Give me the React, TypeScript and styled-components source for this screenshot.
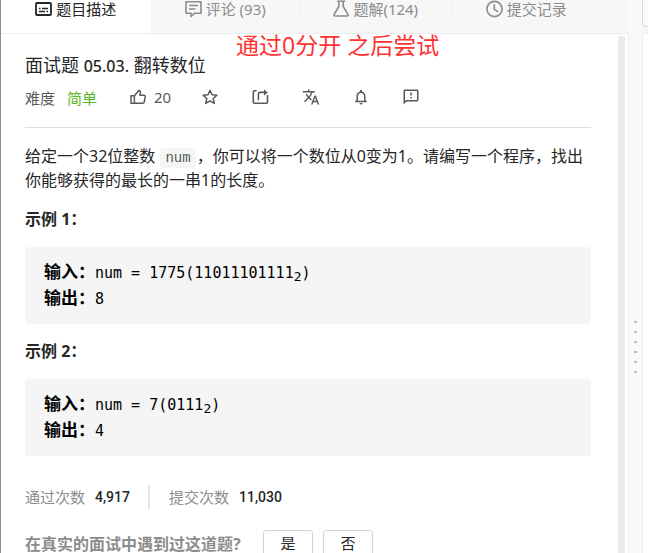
import React from "react";
import styled, { createGlobalStyle } from "styled-components";
import {
  MdOutlineFeedback,
  MdNotificationsNone,
  MdTranslate,
} from "react-icons/md";

const GlobalStyle = createGlobalStyle`
  * { box-sizing: border-box; }
  body {
    margin: 0;
    overflow: hidden;
    background: #fff;
    color: #262626;
    font-family: "Noto Sans", "Noto Sans CJK SC", sans-serif;
    font-size: 16px;
  }
  button { font: inherit; cursor: pointer; }
`;

const Page = styled.div`
  display: flex;
  height: 100vh;
  border-left: 1px solid #8c8c8c;
  background: #f7f7f7;
`;

const ProblemPane = styled.section`
  position: relative;
  display: flex;
  flex: 1;
  flex-direction: column;
  min-width: 0;
`;

const TabBar = styled.div`
  display: flex;
  height: 33px;
  padding-right: 28px;
`;

const Tab = styled.button<{ $active?: boolean }>`
  display: flex;
  flex: 1;
  align-items: flex-start;
  justify-content: center;
  gap: 4px;
  padding: 0;
  border: 0;
  background: ${(p) => (p.$active ? "#fff" : "transparent")};
  color: ${(p) => (p.$active ? "#262626" : "#8c8c8c")};
  font-size: 15px;
  line-height: 18px;
  white-space: nowrap;
  svg { flex: none; }
`;

const TabDivider = styled.span`
  width: 1px;
  height: 18px;
  background: #ececec;
`;

const Body = styled.div`
  display: flex;
  flex: 1;
  min-height: 0;
  border-top: 1px solid #ececec;
  border-right: 1px solid #ececec;
  background: #fff;
`;

const Content = styled.div`
  flex: 1;
  min-width: 0;
  overflow: hidden;
  padding: 16px 27px 0 24px;
`;

const ScrollTrack = styled.div`
  width: 7px;
  margin: 2px 3px 0 0;
  background: #ebebeb;
`;

const Title = styled.h1`
  margin: 0;
  font-size: 18px;
  font-weight: 400;
  line-height: 30px;
`;

const TitleNumber = styled.span`
  font-size: 16px;
  font-weight: 500;
`;

const MetaRow = styled.div`
  display: flex;
  align-items: center;
  height: 32px;
  color: #595959;
  font-size: 15px;
`;

const Difficulty = styled.span`
  width: 63px;
  margin-left: 12px;
  color: #5ab726;
`;

const IconButton = styled.button<{ $wide?: boolean }>`
  display: flex;
  align-items: center;
  gap: 8px;
  width: ${(p) => (p.$wide ? 72 : 50)}px;
  padding: 0;
  border: 0;
  background: none;
  color: #595959;
`;

const Rule = styled.hr`
  margin: 14px 0 16px;
  border: 0;
  border-top: 1px solid #dedede;
`;

const Paragraph = styled.p`
  margin: 0 0 15px;
  line-height: 24px;
`;

const InlineCode = styled.code`
  margin: 0 1px;
  padding: 2px 5px;
  border-radius: 3px;
  background: #f5f5f5;
  color: #595959;
  font-family: "Liberation Mono", monospace;
  font-size: 14px;
  line-height: 16px;
`;

const Example = styled.p`
  margin: 0 0 16px;
  font-weight: 700;
  line-height: 24px;
`;

const CodeBlock = styled.pre`
  margin: 0 0 15px;
  padding: 13px 18px 12px 19px;
  border-radius: 4px;
  background: #f5f5f5;
  color: #000;
  font-family: "DejaVu Sans Mono", "Noto Sans CJK SC", monospace;
  font-size: 15px;
  line-height: 26px;
`;

const Label = styled.strong`
  font-family: "Noto Sans CJK SC", sans-serif;
  font-size: 17px;
  line-height: 20px;
`;

const Sub = styled.sub`
  font-size: 13px;
  line-height: 0;
  vertical-align: -3px;
`;

const Stats = styled.div`
  display: flex;
  align-items: center;
  margin-top: 29px;
  color: #8c8c8c;
  font-size: 15px;
  line-height: 24px;
`;

const StatValue = styled.b`
  margin-left: 10px;
  color: #262626;
  font-family: Roboto, sans-serif;
  font-size: 14px;
  font-weight: 500;
`;

const StatDivider = styled.span`
  width: 2px;
  height: 24px;
  margin: 0 19px 0 18px;
  background: #e4e4e4;
`;

const Survey = styled.div`
  display: flex;
  align-items: center;
  gap: 10px;
  margin-top: 21px;
  color: #8c8c8c;
`;

const SurveyText = styled.span`
  min-width: 228px;
  font-weight: 700;
  white-space: nowrap;
`;

const Choice = styled.button`
  width: 50px;
  height: 26px;
  padding: 0;
  border: 1px solid #d4d4d4;
  border-radius: 3px;
  background: #fff;
  color: #262626;
  font-size: 15px;
  line-height: 22px;
`;

const Annotation = styled.div`
  position: absolute;
  top: 30px;
  left: 235px;
  color: #ff3333;
  font-size: 23px;
  line-height: 30px;
  white-space: nowrap;
`;

const Gutter = styled.div`
  display: flex;
  flex-direction: column;
  align-items: center;
  gap: 8px;
  width: 13px;
  padding-top: 321px;
  background: #f9f9f9;
`;

const Dot = styled.span`
  width: 3px;
  height: 2px;
  background: #bdbdbd;
`;

const EditorPane = styled.section`
  display: flex;
  flex-direction: column;
  width: 6px;
`;

const EditorControl = styled.div`
  height: 27px;
  margin-bottom: 6px;
  border: 1px solid #d9d9d9;
  border-width: 0 0 1px 1px;
  border-bottom-left-radius: 4px;
  background: #fafafa;
`;

const EditorBody = styled.div`
  flex: 1;
  border: 1px solid #ececec;
  border-width: 1px 0 0 1px;
  background: #fff;
`;

const DescriptionIcon = () => (
  <svg width="17" height="18" viewBox="0 0 17 18" fill="none" stroke="currentColor" strokeWidth="1.8">
    <rect x="1" y="3" width="15" height="12" rx="1" />
    <path d="M4 8.5h1.5M7 8.5h6M4 11.5h6M11.5 11.5H13" strokeWidth="1.5" />
  </svg>
);

const CommentIcon = () => (
  <svg width="17" height="18" viewBox="0 0 17 18" fill="none" stroke="currentColor" strokeWidth="1.6">
    <path d="M1 1.8h15v11.5H9.5L6 16.5v-3.2H1z" strokeLinejoin="round" />
    <path d="M4 5.5h9M4 9h6.5" />
  </svg>
);

const FlaskIcon = () => (
  <svg width="16" height="18" viewBox="0 0 16 18" fill="none" stroke="currentColor" strokeWidth="1.6">
    <path d="M4 1.3h8M5.8 1.3v5.2L1.1 14.3q-.6 1.7 1.2 1.7h11.4q1.8 0 1.2-1.7L10.2 6.5V1.3" strokeLinejoin="round" />
  </svg>
);

const ClockIcon = () => (
  <svg width="17" height="18" viewBox="0 0 17 18" fill="none" stroke="currentColor" strokeWidth="1.6">
    <circle cx="8.5" cy="9" r="7.6" />
    <path d="M8.3 4.2v5.2l3.7 2.3" />
  </svg>
);

const ThumbIcon = () => (
  <svg width="16" height="16" viewBox="0 0 16 16" fill="none" stroke="currentColor" strokeWidth="1.5" strokeLinejoin="round">
    <path d="M4.4 6.8H1v7.5h3.4zM4.4 14.3h8.3q1.2 0 1.5-1.2l1-5.2q.2-1.6-1.3-1.6H9.8l.6-3q.1-1.7-1.5-2.1L4.4 6.8" />
  </svg>
);

const StarIcon = () => (
  <svg width="16" height="16" viewBox="0 0 16 16" fill="none" stroke="currentColor" strokeWidth="1.5" strokeLinejoin="round">
    <path d="M8 1.3l2 4.5 4.9.5-3.7 3.2 1.1 4.9L8 11.9l-4.3 2.5 1.1-4.9L1.1 6.3 6 5.8z" />
  </svg>
);

const ShareIcon = () => (
  <svg width="17" height="16" viewBox="0 0 17 16" fill="none" stroke="currentColor" strokeWidth="1.6">
    <path d="M4.6 1.8H2.3q-1 0-1 1v10.5q0 1 1 1h12.2q1 0 1-1V6" />
    <path d="M6.4 11.2V5q0-1.6 1.6-1.6h5" />
    <path d="M12 .4l3.8 3L12 6.4z" fill="currentColor" stroke="none" />
  </svg>
);

export default function App() {
  return (
    <>
      <GlobalStyle />
      <Page>
        <ProblemPane>
          <TabBar>
            <Tab $active><DescriptionIcon />题目描述</Tab>
            <Tab><CommentIcon />评论 (93)</Tab>
            <TabDivider />
            <Tab><FlaskIcon />题解(124)</Tab>
            <TabDivider />
            <Tab><ClockIcon />提交记录</Tab>
          </TabBar>
          <Body>
            <Content>
              <Title>面试题 <TitleNumber>05.03.</TitleNumber> 翻转数位</Title>
              <MetaRow>
                难度
                <Difficulty>简单</Difficulty>
                <IconButton $wide><ThumbIcon />20</IconButton>
                <IconButton aria-label="收藏"><StarIcon /></IconButton>
                <IconButton aria-label="分享"><ShareIcon /></IconButton>
                <IconButton aria-label="翻译"><MdTranslate size={18} /></IconButton>
                <IconButton aria-label="通知"><MdNotificationsNone size={18} /></IconButton>
                <IconButton aria-label="反馈"><MdOutlineFeedback size={18} /></IconButton>
              </MetaRow>
              <Rule />
              <Paragraph>
                给定一个32位整数 <InlineCode>num</InlineCode>，你可以将一个数位从0变为1。请编写一个程序，找出你能够获得的最长的一串1的长度。
              </Paragraph>
              <Example>示例 1：</Example>
              <CodeBlock>
                <Label>输入：</Label>num = 1775(11011101111<Sub>2</Sub>){"\n"}
                <Label>输出：</Label>8
              </CodeBlock>
              <Example>示例 2：</Example>
              <CodeBlock>
                <Label>输入：</Label>num = 7(0111<Sub>2</Sub>){"\n"}
                <Label>输出：</Label>4
              </CodeBlock>
              <Stats>
                通过次数<StatValue>4,917</StatValue>
                <StatDivider />
                提交次数<StatValue>11,030</StatValue>
              </Stats>
              <Survey>
                <SurveyText>在真实的面试中遇到过这道题?</SurveyText>
                <Choice>是</Choice>
                <Choice>否</Choice>
              </Survey>
            </Content>
            <ScrollTrack />
          </Body>
          <Annotation>通过0分开 之后尝试</Annotation>
        </ProblemPane>
        <Gutter>
          <Dot /><Dot /><Dot /><Dot /><Dot /><Dot />
        </Gutter>
        <EditorPane>
          <EditorControl />
          <EditorBody />
        </EditorPane>
      </Page>
    </>
  );
}
